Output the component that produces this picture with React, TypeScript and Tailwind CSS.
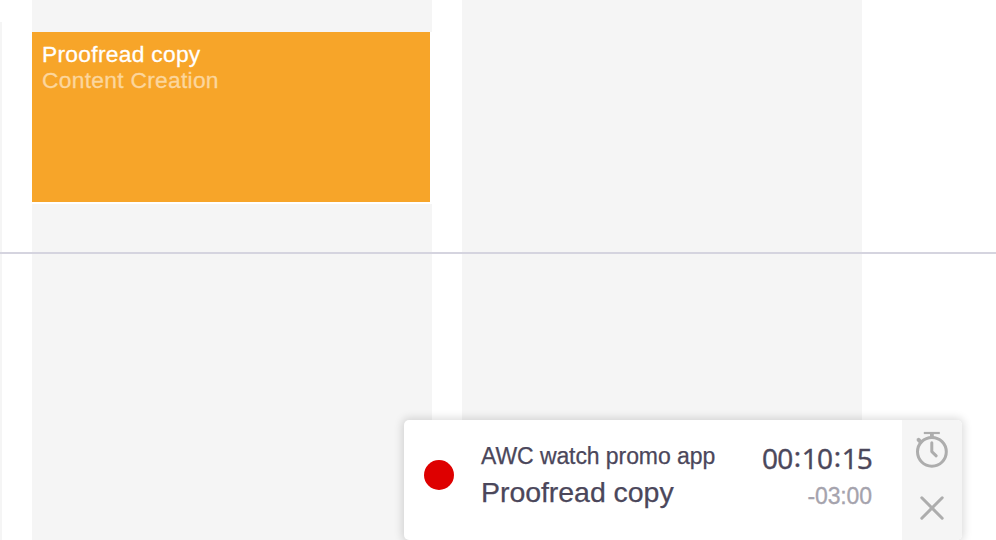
const sans = 'font-["Liberation_Sans",sans-serif]';

function Stopwatch() {
  return (
    <svg width="36" height="40" viewBox="0 0 36 40" fill="none" stroke="#adadad" strokeWidth="3">
      <circle cx="17.9" cy="21.8" r="14.4" />
      <path d="M9.8 3H25.8" strokeWidth="2.2" />
      <path d="M17.9 3v5" strokeWidth="3.8" />
      <path d="M17.8 12.8V21.6L22.2 25.8" strokeWidth="3" strokeLinecap="round" strokeLinejoin="round" />
      <path d="M4.6 9.8L6.6 11.8" strokeWidth="4" strokeLinecap="round" />
    </svg>
  );
}

function Close() {
  return (
    <svg width="26" height="26" viewBox="0 0 26 26" fill="none" stroke="#adadad" strokeWidth="3" strokeLinecap="round">
      <path d="M2.8 2.8L23.2 23.2M23.2 2.8L2.8 23.2" />
    </svg>
  );
}

function Clock({ parts }: { parts: string[] }) {
  return (
    <div className='flex justify-end font-["Open_Sans",sans-serif] text-[28px] leading-[34px] tracking-[-0.85px] text-[#4b475b] [-webkit-text-stroke:0.45px_#4b475b]'>
      {parts.map((part, i) => (
        <span key={i} className="flex">
          {i > 0 && <span className="-mt-[2px] flex w-[9.5px] justify-center">:</span>}
          <span>{part}</span>
        </span>
      ))}
    </div>
  );
}

function TimerPanel() {
  return (
    <div className="absolute top-[420px] left-[404px] flex h-[120px] w-[558px] rounded-[5px] bg-white shadow-[0_0_8px_2px_rgba(0,0,0,0.14)]">
      <div className="mt-10 ml-5 size-[30px] shrink-0 rounded-full bg-[#de0000]" />
      <div className="ml-[27px] flex-1 pt-[23px] whitespace-nowrap text-[#4b475b] [-webkit-text-stroke:0.25px_#4b475b]">
        <div className="text-[23px] leading-[26px] tracking-[-0.08px]">AWC watch promo app</div>
        <div className="mt-[6px] text-[28.5px] leading-[34px] tracking-[-0.05px]">Proofread copy</div>
      </div>
      <div className="mr-[30px] pt-[21px] text-right whitespace-nowrap">
        <Clock parts={['00', '10', '15']} />
        <div className="mt-[8px] text-[23px] leading-[26px] tracking-[-0.1px] text-[#a5a3ad] [-webkit-text-stroke:0.3px_#a5a3ad]">-03:00</div>
      </div>
      <div className="flex w-[60px] shrink-0 flex-col items-center rounded-r-[5px] bg-[#f5f5f5] pt-[10px]">
        <Stopwatch />
        <div className="mt-[25px]">
          <Close />
        </div>
      </div>
    </div>
  );
}

export default function App() {
  return (
    <div className={`relative h-[540px] w-[996px] overflow-hidden bg-white ${sans}`}>
      <div className="flex h-full">
        <div className="w-8 shrink-0 pt-[22px]">
          <div className="h-full w-[2px] bg-[#f5f5f5]" />
        </div>
        <div className="w-[400px] shrink-0 bg-[#f5f5f5] pt-8">
          <div className="h-[172px] border-r-2 border-b-2 border-white bg-[#f7a529] bg-clip-padding pt-[9px] pl-[10px] text-[22.8px] leading-[26px] tracking-[0.28px] text-white">
            <div className="[-webkit-text-stroke:0.3px_#ffffff]">Proofread copy</div>
            <div className="text-[#fcd69d] [-webkit-text-stroke:0.3px_#fcd69d]">Content Creation</div>
          </div>
        </div>
        <div className="ml-[30px] w-[400px] shrink-0 bg-[#f5f5f5]" />
      </div>
      <div className="absolute top-[252px] left-0 h-[2px] w-full bg-[#d5d4df]" />
      <TimerPanel />
    </div>
  );
}
